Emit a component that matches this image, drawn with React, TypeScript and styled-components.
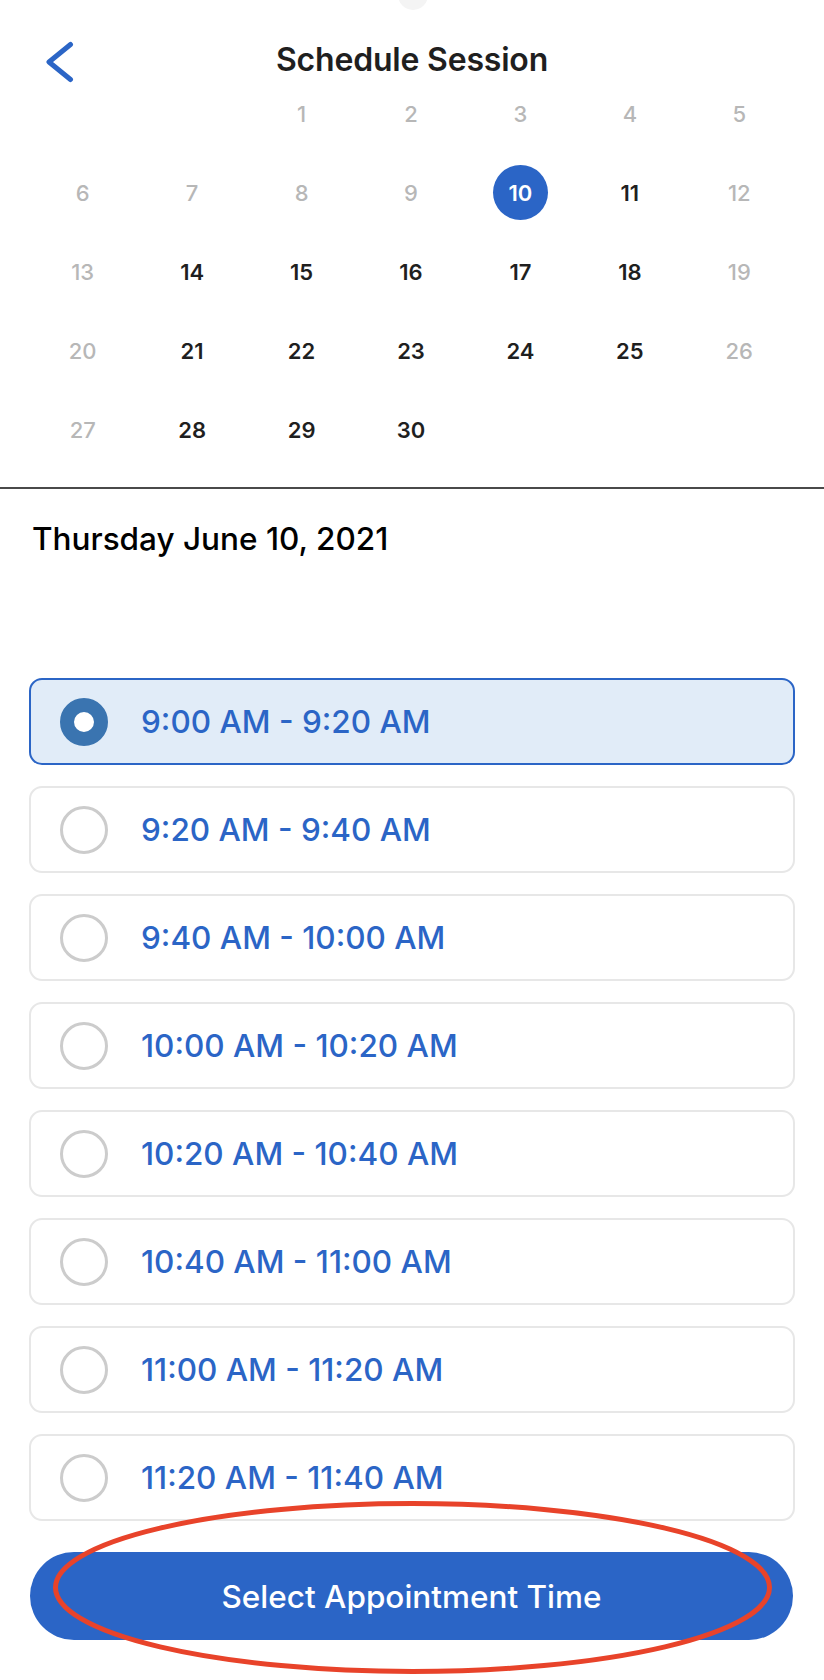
import React from "react";
import styled, { createGlobalStyle } from "styled-components";

const colors = {
  primary: "#2b65c6",
  radio: "#3a74b0",
  selectedBg: "#e1ecf8",
  muted: "#b7b7b7",
  text: "#1f1f1f",
  border: "#e7e7e7",
  divider: "#4a4a4a",
  annotation: "#e8432a",
};

const GlobalStyle = createGlobalStyle`
  * { box-sizing: border-box; }
  body {
    margin: 0;
    background: #ffffff;
    font-family: Inter, "Noto Sans", "Liberation Sans", sans-serif;
    -webkit-font-smoothing: antialiased;
  }
`;

const Page = styled.div`
  position: relative;
  width: 100%;
  min-height: 1680px;
  background: #ffffff;
  overflow: hidden;
`;

const Notch = styled.div`
  position: absolute;
  top: -20px;
  left: 398px;
  width: 30px;
  height: 30px;
  border-radius: 50%;
  background: #f4f4f4;
`;

const Header = styled.header`
  height: 74px;
  padding: 36px 0 0 44px;
  display: grid;
  grid-template-columns: 1fr auto 1fr;
  align-items: center;
`;

const BackButton = styled.button`
  width: 30px;
  height: 44px;
  margin-top: 4px;
  padding: 0;
  border: none;
  background: none;
  display: flex;
  cursor: pointer;
`;

const Title = styled.h1`
  margin: 0 44px 0 0;
  font-size: 32px;
  line-height: 36px;
  font-weight: 600;
  letter-spacing: -0.2px;
  color: ${colors.text};
`;

const CalendarGrid = styled.div`
  padding: 0 30px 0 28px;
  display: grid;
  grid-template-columns: repeat(7, 1fr);
  grid-auto-rows: 79px;
`;

type Tone = "muted" | "active" | "selected";

const DayCell = styled.div<{ $col?: number }>`
  display: flex;
  align-items: center;
  justify-content: center;
  ${(p) => (p.$col ? `grid-column-start: ${p.$col};` : "")}
`;

const DayNumber = styled.span<{ $tone: Tone }>`
  width: 55px;
  height: 55px;
  border-radius: 50%;
  display: flex;
  align-items: center;
  justify-content: center;
  font-size: 22px;
  font-weight: ${(p) => (p.$tone === "muted" ? 500 : 600)};
  color: ${(p) =>
    p.$tone === "muted" ? colors.muted : p.$tone === "selected" ? "#ffffff" : colors.text};
  background: ${(p) => (p.$tone === "selected" ? colors.primary : "transparent")};
`;

const Divider = styled.hr`
  margin: 18px 0 0;
  height: 2px;
  border: none;
  background: ${colors.divider};
`;

const DateLabel = styled.h2`
  margin: 31px 0 0 32px;
  font-size: 31.5px;
  line-height: 38px;
  font-weight: 500;
  color: #000000;
`;

const SlotList = styled.div`
  margin-top: 120px;
  padding: 0 29px;
  display: flex;
  flex-direction: column;
  gap: 21px;
`;

const SlotCard = styled.label<{ $selected: boolean }>`
  height: 87px;
  padding-left: 29px;
  display: flex;
  align-items: center;
  gap: 33px;
  border-radius: 13px;
  border: 2px solid ${(p) => (p.$selected ? colors.primary : colors.border)};
  background: ${(p) => (p.$selected ? colors.selectedBg : "#ffffff")};
  cursor: pointer;
`;

const Radio = styled.span<{ $selected: boolean }>`
  width: 48px;
  height: 48px;
  flex-shrink: 0;
  border-radius: 50%;
  background: ${(p) => (p.$selected ? "#ffffff" : "transparent")};
  border: ${(p) => (p.$selected ? `14px solid ${colors.radio}` : "3px solid #cccccc")};
`;

const SlotText = styled.span`
  font-size: 31.5px;
  font-weight: 500;
  color: ${colors.primary};
`;

const Footer = styled.div`
  position: relative;
  margin-top: 31px;
  padding: 0 31px 39px 30px;
`;

const PrimaryButton = styled.button`
  width: 100%;
  height: 88px;
  border: none;
  border-radius: 44px;
  background: ${colors.primary};
  color: #ffffff;
  font-family: inherit;
  font-size: 31.5px;
  font-weight: 500;
  cursor: pointer;
`;

const Annotation = styled.svg`
  position: absolute;
  left: 0;
  top: -60px;
  pointer-events: none;
`;

const monthDays = Array.from({ length: 30 }, (_, i) => i + 1);
const selectedDay = 10;
const mutedDays = [12, 13, 19, 20, 26, 27];

const toneFor = (day: number): Tone => {
  if (day === selectedDay) return "selected";
  if (day < selectedDay || mutedDays.includes(day)) return "muted";
  return "active";
};

const slots = [
  "9:00 AM - 9:20 AM",
  "9:20 AM - 9:40 AM",
  "9:40 AM - 10:00 AM",
  "10:00 AM - 10:20 AM",
  "10:20 AM - 10:40 AM",
  "10:40 AM - 11:00 AM",
  "11:00 AM - 11:20 AM",
  "11:20 AM - 11:40 AM",
];

function App() {
  const [selected, setSelected] = React.useState(0);

  return (
    <Page>
      <GlobalStyle />
      <Notch />
      <Header>
        <BackButton aria-label="Back">
          <svg width="30" height="44" viewBox="0 0 30 44" fill="none">
            <path
              d="M26.5 4.5 L5 22 L26.5 39.5"
              stroke={colors.primary}
              strokeWidth="5"
              strokeLinecap="round"
              strokeLinejoin="round"
            />
          </svg>
        </BackButton>
        <Title>Schedule Session</Title>
      </Header>

      <CalendarGrid>
        {monthDays.map((day) => (
          <DayCell key={day} $col={day === 1 ? 3 : undefined}>
            <DayNumber $tone={toneFor(day)}>{day}</DayNumber>
          </DayCell>
        ))}
      </CalendarGrid>

      <Divider />
      <DateLabel>Thursday June 10, 2021</DateLabel>

      <SlotList>
        {slots.map((slot, i) => (
          <SlotCard key={slot} $selected={i === selected} onClick={() => setSelected(i)}>
            <Radio $selected={i === selected} />
            <SlotText>{slot}</SlotText>
          </SlotCard>
        ))}
      </SlotList>

      <Footer>
        <PrimaryButton>Select Appointment Time</PrimaryButton>
        <Annotation width="824" height="190" viewBox="0 0 824 190">
          <ellipse
            cx="412.5"
            cy="95.5"
            rx="357"
            ry="84"
            fill="none"
            stroke={colors.annotation}
            strokeWidth="5"
          />
        </Annotation>
      </Footer>
    </Page>
  );
}

export default App;
